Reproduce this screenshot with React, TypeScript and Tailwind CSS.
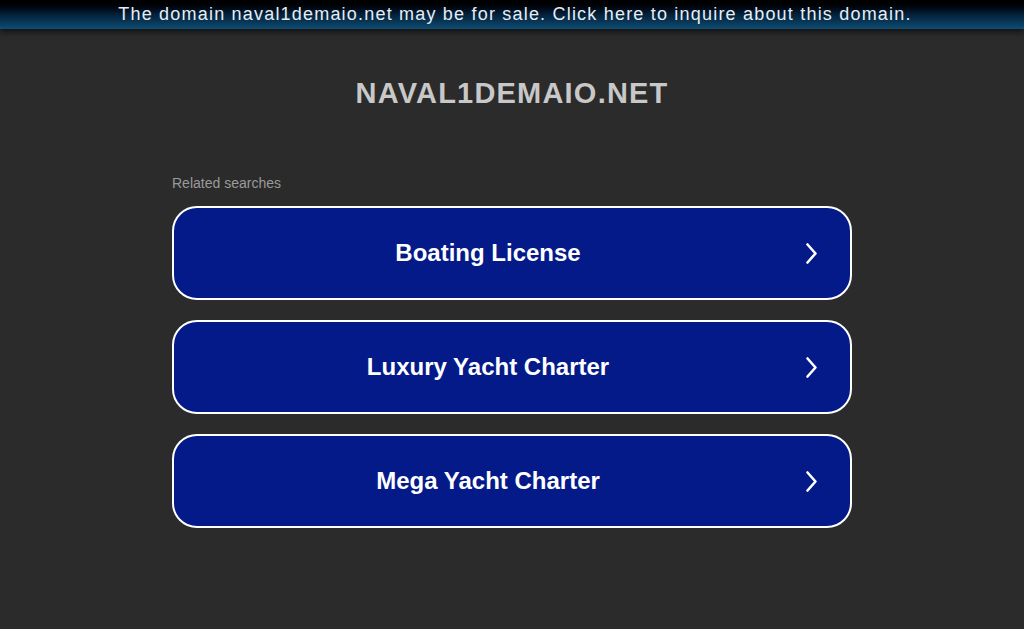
export default function App() {
  const items = ["Boating License", "Luxury Yacht Charter", "Mega Yacht Charter"];
  return (
    <div className="min-h-[629px] bg-[#2b2b2b] font-['Liberation_Sans',Arial,sans-serif]">
      <div className="h-[29px] bg-gradient-to-b from-[#000000] via-[#04213a] to-[#0f4d74] pl-[6px] text-center text-[18px] leading-[28px] tracking-[1.2px] text-[#e6eef5] shadow-[0_3px_6px_rgba(0,0,0,0.6)]">
        The domain naval1demaio.net may be for sale. Click here to inquire about this domain.
      </div>
      <h1 className="mt-[47px] text-center text-[29px] font-bold leading-[34px] tracking-[1.2px] text-[#c8c8c8]">
        NAVAL1DEMAIO.NET
      </h1>
      <div className="mx-auto mt-[65px] w-[680px]">
        <p className="text-[14px] leading-[16px] text-[#9a9a9a]">Related searches</p>
        <div className="mt-[15px] flex flex-col gap-[20px]">
          {items.map((t) => (
            <div
              key={t}
              className="flex h-[94px] items-center rounded-[25px] border-2 border-white bg-[#031a88]"
            >
              <span className="flex-1 pl-[2px] text-center text-[24px] font-bold text-white">{t}</span>
              <svg width="48" height="25" viewBox="0 0 48 25" className="mr-[2px]">
                <path d="M7.5 3.5 L15.5 12.5 L7.5 21.5" fill="none" stroke="white" strokeWidth="2.6" strokeLinecap="round" strokeLinejoin="round" />
              </svg>
            </div>
          ))}
        </div>
      </div>
    </div>
  );
}
